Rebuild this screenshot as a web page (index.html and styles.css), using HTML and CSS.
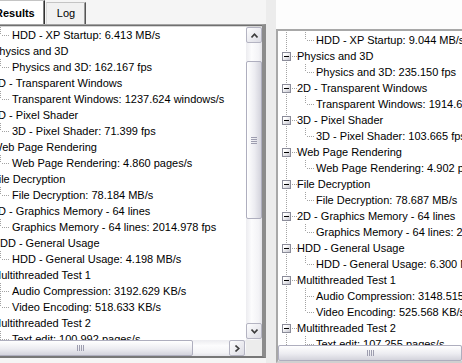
FILE: index.html
```html
<!DOCTYPE html>
<html lang="en">
<head>
  <meta charset="UTF-8">
  <title>Benchmark Results</title>
  <link rel="stylesheet" href="styles.css">
</head>
<body>

  <div class="app">
    <div class="left-pane">
      <div class="tabs">
        <div class="tab active">Results</div>
        <div class="tab">Log</div>
      </div>
      <div class="page">
        <div class="view">
          <div class="viewport">
            <ul class="tree tree-left" id="leftTree"></ul>
          </div>
          <div class="vscroll">
            <div class="sb-btn">
              <svg width="7" height="5" viewBox="0 0 7 5"><path d="M0.5 4.5 L3.5 1.2 L6.5 4.5" fill="none" stroke="#3c3c3c" stroke-width="1.6"/></svg>
            </div>
            <div class="vthumb"><span class="grip-h"></span></div>
            <div class="sb-btn down">
              <svg width="7" height="5" viewBox="0 0 7 5"><path d="M0.5 0.5 L3.5 3.8 L6.5 0.5" fill="none" stroke="#3c3c3c" stroke-width="1.6"/></svg>
            </div>
          </div>
        </div>
        <div class="hbar">
          <div class="hscroll">
            <div class="hthumb-clip"><div class="hthumb left-thumb"><span class="grip-v"></span></div></div>
            <div class="sb-btn right">
              <svg width="5" height="7" viewBox="0 0 5 7"><path d="M0.5 0.5 L3.8 3.5 L0.5 6.5" fill="none" stroke="#3c3c3c" stroke-width="1.6"/></svg>
            </div>
          </div>
          <div class="corner"></div>
        </div>
      </div>
    </div>

    <div class="splitter"></div>

    <div class="right-pane">
      <div class="list">
        <div class="viewport">
          <ul class="tree tree-right" id="rightTree"></ul>
        </div>
        <div class="hscroll wide">
          <div class="hthumb right-thumb"><span class="grip-v"></span></div>
        </div>
      </div>
    </div>
  </div>

  <script>
    const tests = [
      { group: "HDD - XP Startup", items: ["HDD - XP Startup"] },
      { group: "Physics and 3D", items: ["Physics and 3D"] },
      { group: "2D - Transparent Windows", items: ["Transparent Windows"] },
      { group: "3D - Pixel Shader", items: ["3D - Pixel Shader"] },
      { group: "Web Page Rendering", items: ["Web Page Rendering"] },
      { group: "File Decryption", items: ["File Decryption"] },
      { group: "2D - Graphics Memory - 64 lines", items: ["Graphics Memory - 64 lines"] },
      { group: "HDD - General Usage", items: ["HDD - General Usage"] },
      { group: "Multithreaded Test 1", items: ["Audio Compression", "Video Encoding"] },
      { group: "Multithreaded Test 2", items: ["Text edit", "Image Decompression"] }
    ];

    const runs = {
      leftTree: ["6.413 MB/s", "162.167 fps", "1237.624 windows/s", "71.399 fps", "4.860 pages/s",
                 "78.184 MB/s", "2014.978 fps", "4.198 MB/s", "3192.629 KB/s", "518.633 KB/s",
                 "100.992 pages/s", "21.340 MPixels/s"],
      rightTree: ["9.044 MB/s", "235.150 fps", "1914.682 windows/s", "103.665 fps", "4.902 pages/s",
                  "78.687 MB/s", "2131.405 fps", "6.300 MB/s", "3148.515 KB/s", "525.568 KB/s",
                  "107.255 pages/s", "22.816 MPixels/s"]
    };

    // skipTop: the first group header is scrolled out of view
    function buildTree(id, skipTop) {
      const tree = document.getElementById(id);
      const values = runs[id];
      let n = 0;
      let html = "";

      tests.forEach((test, g) => {
        if (!(skipTop && g === 0)) {
          html += `<li class="row"><span class="cell node"><span class="box"></span></span><span class="label">${test.group}</span></li>`;
        }
        test.items.forEach((item, i) => {
          const joint = i === test.items.length - 1 ? "ell" : "tee";
          html += `<li class="row"><span class="cell pipe"></span><span class="cell ${joint}"></span><span class="label">${item}: ${values[n]}</span></li>`;
          n++;
        });
      });

      tree.innerHTML = html;
    }

    buildTree("leftTree", true);
    buildTree("rightTree", false);
  </script>

</body>
</html>
```

FILE: styles.css
```css
* {
  box-sizing: border-box;
}
html, body {
  margin: 0;
}
body {
  width: 462px;
  height: 363px;
  overflow: hidden;
  background: #f5f5f5;
  font-family: "Liberation Sans", Arial, sans-serif;
  font-size: 11px;
  color: #000;
}
.app {
  display: flex;
  height: 363px;
}

/* left side: tab control */
.left-pane {
  width: 266px;
  flex-shrink: 0;
  display: flex;
  flex-direction: column;
}
.tabs {
  height: 24px;
  display: flex;
  align-items: flex-end;
  margin-left: -9px;
}
.tab {
  height: 22px;
  width: 40px;
  line-height: 20px;
  text-align: center;
  background: #f1f1f1;
  border-top: 1px solid #c4c4c4;
  border-left: 1px solid #dadada;
  border-right: 1px solid #555;
  box-shadow: inset -1px 0 #9a9a9a;
}
.tab.active {
  height: 24px;
  width: 54px;
  line-height: 24px;
  margin-right: 1px;
  padding-left: 3px;
  text-align: left;
  font-weight: bold;
  background: #fff;
  border-right: 1px solid #333;
  box-shadow: inset -1px 0 #808080;
}
.page {
  height: 334px;
  background: #fff;
  border-top: 1px solid #a4a4a4;
  border-right: 4px solid #8c8c8c;
  border-bottom: 2px solid #777;
  box-shadow: inset 0 1px #707070, inset 0 2px #d6d6d6, inset -2px 0 #d6d6d6;
  padding-top: 2px;
  display: flex;
  flex-direction: column;
}
.view {
  height: 313px;
  display: flex;
}
.viewport {
  flex: 1;
  overflow: hidden;
  background: #fff;
}

/* tree */
.tree {
  list-style: none;
  margin: 0;
  padding: 0;
  width: max-content;
}
.tree-left {
  margin-left: -27px;
}
.tree-right {
  margin-top: -15px;
}
.row {
  display: flex;
  height: 16px;
  line-height: 16px;
  white-space: nowrap;
}
.cell {
  width: 19px;
  height: 16px;
  flex-shrink: 0;
  background-repeat: no-repeat;
}
.pipe {
  background-image: repeating-linear-gradient(to bottom, #a3a3a3 0 1px, transparent 1px 2px);
  background-size: 1px 16px;
  background-position: 8px 0;
}
.tee, .ell {
  background-image:
    repeating-linear-gradient(to bottom, #a3a3a3 0 1px, transparent 1px 2px),
    repeating-linear-gradient(to right, #a3a3a3 0 1px, transparent 1px 2px);
  background-size: 1px 16px, 8px 1px;
  background-position: 8px 0, 10px 8px;
}
.ell {
  background-size: 1px 8px, 8px 1px;
}
.node {
  background-image:
    repeating-linear-gradient(to bottom, #a3a3a3 0 1px, transparent 1px 2px),
    repeating-linear-gradient(to right, #a3a3a3 0 1px, transparent 1px 2px);
  background-size: 1px 16px, 5px 1px;
  background-position: 8px 0, 14px 8px;
  padding: 4px 0 0 4px;
}
.box {
  display: flex;
  align-items: center;
  justify-content: center;
  width: 9px;
  height: 9px;
  border: 1px solid #8b8c99;
  background: linear-gradient(135deg, #ffffff 25%, #c5c5ce);
}
.box::before {
  content: "";
  width: 5px;
  height: 1px;
  background: #000;
}
.tree-left .pipe + .cell + .label {
  padding-left: 1px;
}

/* scrollbars */
.vscroll {
  width: 16px;
  flex-shrink: 0;
  display: flex;
  flex-direction: column;
  background: linear-gradient(to right, #ececf0, #fcfcfd 35%, #f3f3f6 80%, #e4e4ea);
}
.sb-btn {
  width: 16px;
  height: 16px;
  flex-shrink: 0;
  display: flex;
  align-items: center;
  justify-content: center;
  border: 1px solid #b4b4c2;
  border-radius: 2px;
  background: linear-gradient(135deg, #fdfdfe, #dcdce4);
}
.sb-btn.down {
  margin-top: auto;
  margin-bottom: 1px;
}
.vthumb {
  margin-top: 18px;
  height: 158px;
  display: flex;
  align-items: center;
  justify-content: center;
  border: 1px solid #aeaebe;
  border-radius: 2px;
  background: linear-gradient(to right, #ffffff, #ececf1 55%, #d3d3dc);
}
.grip-h {
  width: 6px;
  height: 7px;
  background: repeating-linear-gradient(to bottom, #9d9daf 0 1px, transparent 1px 2px);
}
.grip-v {
  width: 7px;
  height: 6px;
  background: repeating-linear-gradient(to right, #9d9daf 0 1px, transparent 1px 2px);
}
.hbar {
  height: 16px;
  display: flex;
}
.hscroll {
  flex: 1;
  height: 16px;
  display: flex;
  background: linear-gradient(to bottom, #ececf0, #fcfcfd 35%, #f3f3f6 80%, #e4e4ea);
}
.hthumb-clip {
  width: 210px;
  overflow: hidden;
}
.hthumb {
  height: 16px;
  display: flex;
  align-items: center;
  justify-content: center;
  border: 1px solid #aeaebe;
  border-radius: 2px;
  background: linear-gradient(to bottom, #ffffff, #ececf1 55%, #d3d3dc);
}
.left-thumb {
  width: 226px;
  margin-left: -33px;
}
.sb-btn.right {
  margin-left: auto;
  margin-right: 1px;
}
.corner {
  width: 16px;
  background: #ececec;
}

/* splitter and right pane */
.splitter {
  width: 10px;
  flex-shrink: 0;
  background: #ececec;
}
.right-pane {
  flex: 1;
  min-width: 0;
  padding-top: 29px;
  background: #fdfdfd;
}
.list {
  height: 334px;
  display: flex;
  flex-direction: column;
  background: #fff;
  border-top: 2px solid #a8a8a8;
  border-left: 2px solid #a8a8a8;
  border-bottom: 2px solid #d0d0d0;
  box-shadow: inset 1px 1px #7c7c7c;
}
.list .viewport {
  flex: none;
  height: 314px;
}
.hscroll.wide {
  flex: none;
}
.right-thumb {
  width: 210px;
}
```
